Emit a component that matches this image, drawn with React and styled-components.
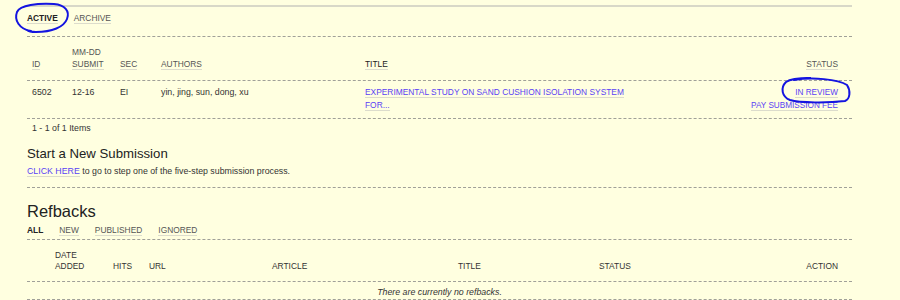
import React from 'react';
import styled, { createGlobalStyle } from 'styled-components';

const GlobalStyle = createGlobalStyle`
  body {
    margin: 0;
    background: #ffffe0;
    font-family: "Liberation Sans", Arial, sans-serif;
    color: #333;
  }
`;

const Page = styled.div`
  position: relative;
  width: 825px;
  padding: 5px 0 0 27px;
`;

const TopRule = styled.div`
  border-top: 2px solid #d8d8c8;
`;

const TabBar = styled.ul`
  display: flex;
  gap: 16px;
  list-style: none;
  margin: 0;
  padding: ${(p) => p.$pad};
  border-bottom: 1px dashed #a0a098;
  line-height: ${(p) => p.$lh || '14px'};
`;

const Tab = styled.li`
  font-size: 8.4px;
  font-weight: ${(p) => (p.$active ? 'bold' : 'normal')};
  color: ${(p) => (p.$active ? '#222' : '#555')};
  span {
    border-bottom: 1px solid #dcdccc;
  }
`;

/* submissions table */
const SubRow = styled.div`
  display: grid;
  grid-template-columns: 40px 48px 41px 204px 270px 1fr;
  padding: ${(p) => p.$pad};
  border-bottom: 1px dashed #a0a098;
  align-items: ${(p) => (p.$head ? 'end' : 'start')};
  line-height: ${(p) => (p.$head ? '12px' : '13px')};
`;

const HeadCell = styled.div`
  font-size: 8.4px;
  color: ${(p) => (p.$dark ? '#222' : '#555')};
  text-align: ${(p) => (p.$right ? 'right' : 'left')};
`;

const SortLink = styled.span`
  border-bottom: 1px solid #dcdccc;
`;

const Cell = styled.div`
  font-size: 8.8px;
  color: #333;
  text-align: ${(p) => (p.$right ? 'right' : 'left')};
`;

const Link = styled.a`
  color: #5a3ff5;
  font-size: ${(p) => p.$size || 'inherit'};
  text-decoration: none;
  border-bottom: 1px solid #dcdccc;
  cursor: pointer;
`;

const Count = styled.div`
  padding: 3px 0 0 5px;
  font-size: 8.8px;
  line-height: 13px;
  color: #333;
`;

const SectionTitle = styled.h3`
  margin: 11px 0 0;
  font-size: 13.2px;
  font-weight: normal;
  line-height: 16px;
  color: #222;
`;

const Note = styled.p`
  margin: 3px 0 0;
  padding-bottom: 9px;
  font-size: 8.8px;
  line-height: 13px;
  color: #333;
  border-bottom: 1px dashed #a0a098;
`;

const RefTitle = styled.h2`
  margin: 13px 0 0;
  font-size: 16.5px;
  font-weight: normal;
  line-height: 20px;
  color: #222;
`;

/* refbacks table */
const RefRow = styled.div`
  display: grid;
  grid-template-columns: 23px 58px 36px 123px 186px 141px 1fr auto;
  padding: 10px 14px 9px 5px;
  border-bottom: 1px dashed #a0a098;
  align-items: end;
  line-height: 11px;
`;

const RefHead = styled.div`
  font-size: 8.4px;
  color: #333;
`;

const EmptyRow = styled.div`
  padding: 4px 0 0;
  line-height: 13px;
  font-size: 8.8px;
  font-style: italic;
  color: #333;
  text-align: center;
  border-bottom: 1px dashed #a0a098;
`;

const Scribble = styled.svg`
  position: absolute;
  left: 0;
  top: 0;
  width: 900px;
  height: 300px;
  pointer-events: none;
  fill: none;
  stroke: #1414e0;
  stroke-width: 2;
  stroke-linecap: round;
`;

export default function App() {
  return (
    <>
      <GlobalStyle />
      <Page>
        <TopRule />
        <TabBar $pad="4px 0 11px">
          <Tab $active><span>ACTIVE</span></Tab>
          <Tab><span>ARCHIVE</span></Tab>
        </TabBar>

        <SubRow $head $pad="9px 14px 10px 5px">
          <HeadCell><SortLink>ID</SortLink></HeadCell>
          <HeadCell>MM-DD<br /><SortLink>SUBMIT</SortLink></HeadCell>
          <HeadCell><SortLink>SEC</SortLink></HeadCell>
          <HeadCell><SortLink>AUTHORS</SortLink></HeadCell>
          <HeadCell $dark><SortLink>TITLE</SortLink></HeadCell>
          <HeadCell $right><SortLink>STATUS</SortLink></HeadCell>
        </SubRow>

        <SubRow $pad="5px 14px 6px 5px">
          <Cell>6502</Cell>
          <Cell>12-16</Cell>
          <Cell>EI</Cell>
          <Cell>yin, jing, sun, dong, xu</Cell>
          <Cell>
            <Link $size="8.4px">EXPERIMENTAL STUDY ON SAND CUSHION ISOLATION SYSTEM FOR...</Link>
          </Cell>
          <Cell $right>
            <Link $size="8.2px">IN REVIEW</Link><br />
            <Link $size="8.2px">PAY SUBMISSION FEE</Link>
          </Cell>
        </SubRow>

        <Count>1 - 1 of 1 Items</Count>

        <SectionTitle>Start a New Submission</SectionTitle>
        <Note><Link>CLICK HERE</Link> to go to step one of the five-step submission process.</Note>

        <RefTitle>Refbacks</RefTitle>
        <TabBar $pad="3px 0 2px" $lh="13px">
          <Tab $active>ALL</Tab>
          <Tab><span>NEW</span></Tab>
          <Tab><span>PUBLISHED</span></Tab>
          <Tab><span>IGNORED</span></Tab>
        </TabBar>

        <RefRow>
          <RefHead />
          <RefHead>DATE<br />ADDED</RefHead>
          <RefHead>HITS</RefHead>
          <RefHead>URL</RefHead>
          <RefHead>ARTICLE</RefHead>
          <RefHead>TITLE</RefHead>
          <RefHead>STATUS</RefHead>
          <RefHead>ACTION</RefHead>
        </RefRow>
        <EmptyRow>There are currently no refbacks.</EmptyRow>

        <Scribble viewBox="0 0 900 300">
          <path d="M31 31 C19 29 14 20 17 12 C20 5 38 3 54 4 C65 5 70 11 67 19 C64 27 52 32 36 32 C31 32 28 31 27 30" />
          <path d="M794 80 C812 77 838 79 847 85 C851 91 850 99 845 101 C828 103 800 103 790 100 C782 97 780 88 786 82 C790 79 800 78 810 78" />
        </Scribble>
      </Page>
    </>
  );
}
